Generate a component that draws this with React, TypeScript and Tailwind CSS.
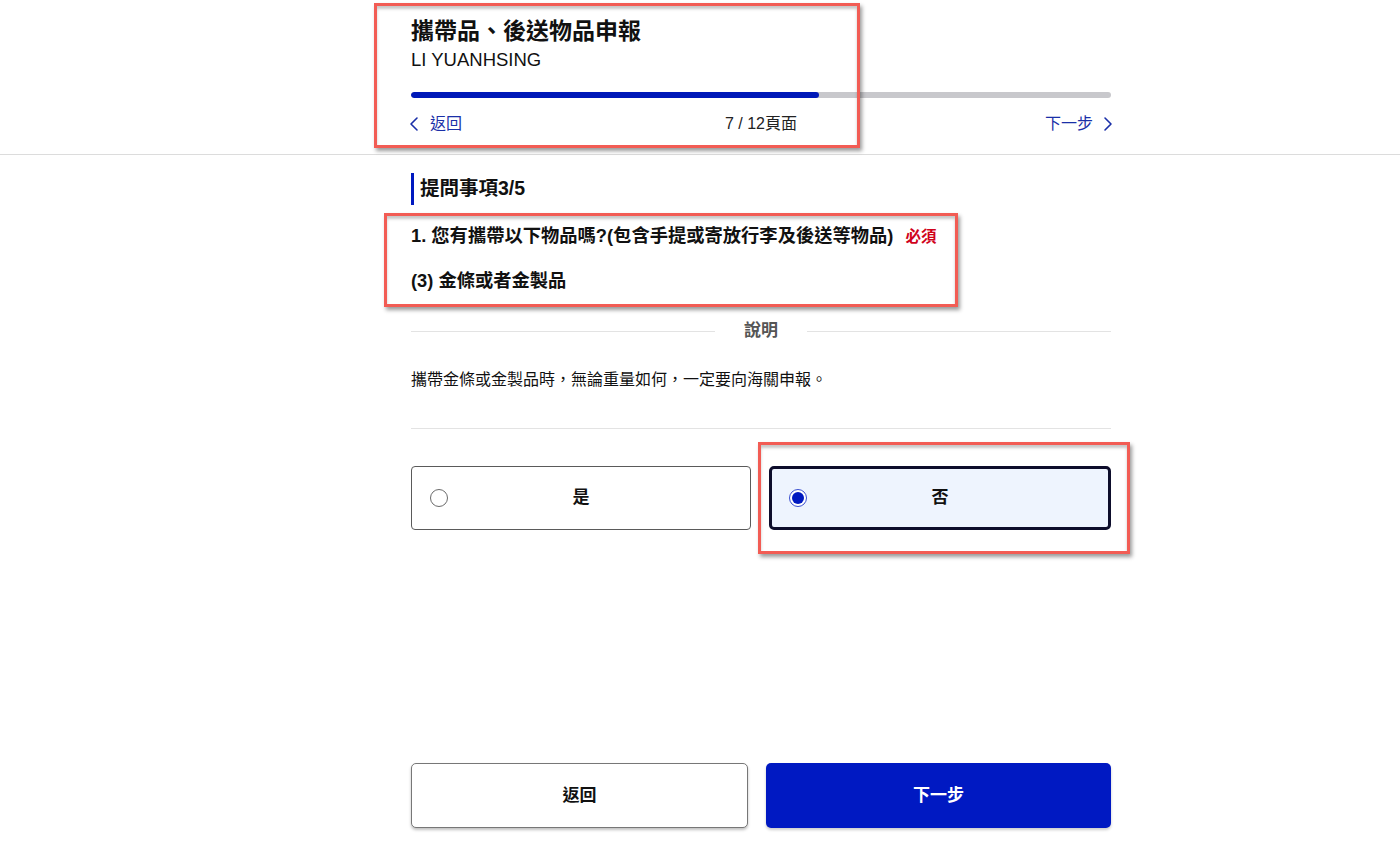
import { ChevronLeft, ChevronRight } from 'lucide-react';

const font = { fontFamily: '"Liberation Sans", "Noto Sans CJK TC", sans-serif' };

const currentPage = 7;
const totalPages = 12;

type Choice = { label: string; selected: boolean };

const choices: Choice[] = [
    { label: '是', selected: false },
    { label: '否', selected: true },
];

function Radio({ checked }: { checked: boolean }) {
    return (
        <span
            className={
                checked
                    ? 'w-[18px] h-[18px] rounded-full border border-[#3a4fd0] bg-white flex items-center justify-center shrink-0'
                    : 'w-[18px] h-[18px] rounded-full border border-[#6b6b6b] bg-white shrink-0'
            }
        >
            {checked && <span className="w-[12px] h-[12px] rounded-full bg-[#0019c0]" />}
        </span>
    );
}

export default function App() {
    const progress = (currentPage / totalPages) * 100;

    return (
        <div className="relative min-h-screen bg-white text-[#111]" style={font}>
            {/* 頁首 */}
            <header className="border-b border-[#dcdcdc]">
                <div className="ml-[411px] w-[700px] pt-[17px] pb-[20px]">
                    <h1 className="text-[23px] leading-[28px] font-bold">攜帶品、後送物品申報</h1>
                    <p className="text-[18.5px] leading-[24px] mt-[3px]">LI YUANHSING</p>
                    <div className="mt-[20px] h-[6px] rounded-full bg-[#c8c8cc] overflow-hidden">
                        <div className="h-full rounded-full bg-[#0019b8]" style={{ width: `${progress}%` }} />
                    </div>
                    <div className="mt-[16px] h-[20px] flex items-center justify-between text-[16px]">
                        <a className="flex items-center gap-[4px] text-[#1a2fa8] w-[140px] -ml-[9px]">
                            <ChevronLeft className="w-[24px] h-[24px]" strokeWidth={1.6} />
                            返回
                        </a>
                        <span className="text-[#222]">
                            {currentPage} / {totalPages}頁面
                        </span>
                        <a className="flex items-center justify-end gap-[3px] text-[#1a2fa8] w-[140px] -mr-[9px]">
                            下一步
                            <ChevronRight className="w-[24px] h-[24px]" strokeWidth={1.6} />
                        </a>
                    </div>
                </div>
            </header>

            <main className="ml-[411px] w-[700px]">
                {/* 區段標題 */}
                <div className="mt-[18px] h-[32px] flex items-center border-l-[3px] border-[#0019c0] pl-[6px]">
                    <h2 className="text-[19.5px] font-bold">提問事項3/5</h2>
                </div>

                {/* 問題 */}
                <p className="mt-[19px] text-[18.3px] leading-[24px] font-bold">
                    1. 您有攜帶以下物品嗎?(包含手提或寄放行李及後送等物品)
                    <span className="ml-[12px] text-[15.5px] text-[#d0021b]">必須</span>
                </p>
                <p className="mt-[20px] text-[18.3px] leading-[24px] font-bold">(3) 金條或者金製品</p>

                {/* 說明 */}
                <div className="mt-[26px] h-[24px] flex items-center">
                    <div className="flex-1 border-t border-[#e3e3e3]" />
                    <span className="px-[29px] text-[17px] font-bold text-[#555]">說明</span>
                    <div className="flex-1 border-t border-[#e3e3e3]" />
                </div>
                <p className="mt-[26px] text-[16px] leading-[22px]">
                    攜帶金條或金製品時，無論重量如何，一定要向海關申報。
                </p>
                <div className="mt-[37px] border-t border-[#e3e3e3]" />

                {/* 選項 */}
                <div className="mt-[37px] flex gap-[18px]">
                    {choices.map((c) => (
                        <label
                            key={c.label}
                            className={
                                c.selected
                                    ? 'flex-1 h-[64px] flex items-center px-[17px] rounded-[5px] border-[3px] border-[#0d0d2b] bg-[#eef4fe]'
                                    : 'flex-1 h-[64px] flex items-center px-[18px] rounded-[4px] border border-[#5a5a5a] bg-white'
                            }
                        >
                            <Radio checked={c.selected} />
                            <span className="flex-1 text-center text-[17px] font-bold">{c.label}</span>
                            <span className="w-[18px]" />
                        </label>
                    ))}
                </div>

                {/* 底部按鈕 */}
                <div className="mt-[233px] grid grid-cols-[337px_1fr] gap-[18px]">
                    <button className="h-[65px] rounded-[5px] border border-[#777] bg-white text-[17px] font-bold shadow-[0_2px_3px_rgba(0,0,0,0.25)]">
                        返回
                    </button>
                    <button className="h-[65px] rounded-[5px] bg-[#0019c2] text-white text-[17px] font-bold shadow-[0_2px_3px_rgba(0,0,0,0.2)]">
                        下一步
                    </button>
                </div>
            </main>

            {/* 標示框 */}
            <div className="absolute left-[374px] top-[3px] w-[486px] h-[145px] border-[3px] border-[#f25c54] shadow-[inset_0_3px_3px_rgba(0,0,0,0.22),2px_3px_4px_rgba(0,0,0,0.4)] pointer-events-none" />
            <div className="absolute left-[384px] top-[213px] w-[574px] h-[94px] border-[3px] border-[#f25c54] shadow-[inset_0_3px_3px_rgba(0,0,0,0.22),2px_3px_4px_rgba(0,0,0,0.4)] pointer-events-none" />
            <div className="absolute left-[758px] top-[442px] w-[372px] h-[112px] border-[3px] border-[#f25c54] shadow-[inset_0_3px_3px_rgba(0,0,0,0.22),2px_3px_4px_rgba(0,0,0,0.4)] pointer-events-none" />
        </div>
    );
}
